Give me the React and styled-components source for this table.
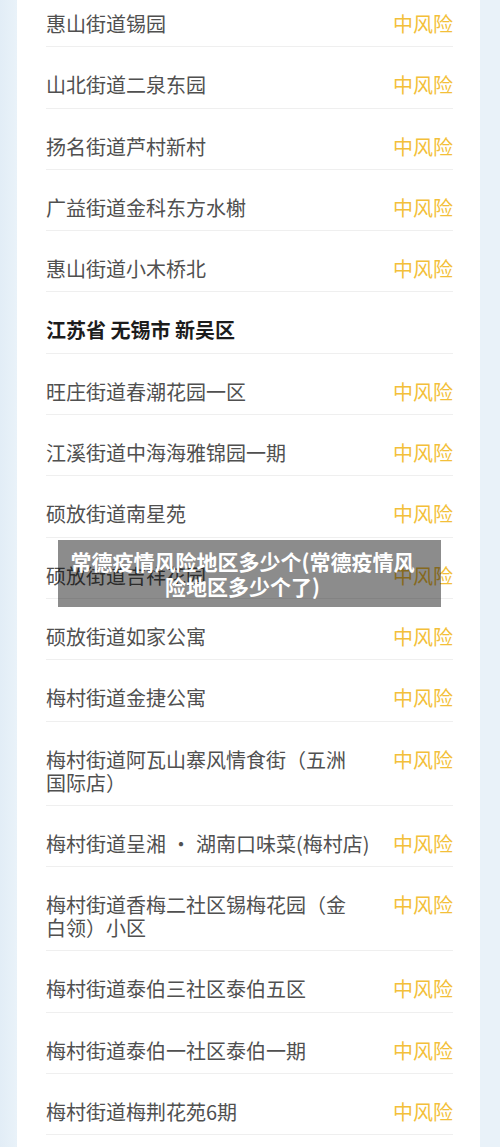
import React from 'react';
import styled, { createGlobalStyle } from 'styled-components';

const GlobalStyle = createGlobalStyle`
  html, body {
    margin: 0;
    padding: 0;
    height: 100%;
    overflow: hidden;
    background: #e6eff7;
  }
  #root {
    height: 100%;
  }
`;

// Page layout
const Page = styled.div`
  position: relative;
  height: 1147px;
  padding: 0 20px 0 17px;
  background: linear-gradient(to right, #e2edf6 0, #e9f2f9 17px, #e9f2f9 100%);
  font-family: 'Noto Sans CJK SC', 'Noto Sans', sans-serif;
  overflow: hidden;
`;

const Card = styled.div`
  display: flow-root;
  background: #fff;
  height: 100%;
  padding: 0 27px 0 29px;
`;

const List = styled.div`
  margin-top: -14px;
  display: flex;
  flex-direction: column;
`;

const Row = styled.div`
  display: flex;
  justify-content: space-between;
  align-items: flex-start;
  padding: 26px 0 11.3px;
  border-bottom: 1px solid #efefef;
  line-height: 23px;
  font-size: 20px;
`;

const Name = styled.div`
  max-width: ${(p) => (p.$nowrap ? 'none' : '318px')};
  color: ${(p) => (p.$header ? '#1c1c1c' : '#505050')};
  font-weight: ${(p) => (p.$header ? 700 : 400)};
  white-space: ${(p) => (p.$nowrap ? 'nowrap' : 'normal')};
`;

const Dot = styled.span`
  display: inline-block;
  margin: 0 5px;
`;

const Risk = styled.div`
  color: #f3bf3a;
  white-space: nowrap;
`;

// Caption overlay on top of the list
const Caption = styled.div`
  position: absolute;
  left: 58px;
  top: 540px;
  width: 383px;
  height: 67px;
  box-sizing: border-box;
  padding: 0 24px 0 10px;
  display: flex;
  align-items: center;
  justify-content: center;
  text-align: center;
  background: rgba(0, 0, 0, 0.45);
  color: #fff;
  font-size: 21px;
  font-weight: 700;
  line-height: 25px;
`;

const rows = [
  { name: '惠山街道锡园' },
  { name: '山北街道二泉东园' },
  { name: '扬名街道芦村新村' },
  { name: '广益街道金科东方水榭' },
  { name: '惠山街道小木桥北' },
  { name: '江苏省 无锡市 新吴区', header: true },
  { name: '旺庄街道春潮花园一区' },
  { name: '江溪街道中海海雅锦园一期' },
  { name: '硕放街道南星苑' },
  { name: '硕放街道吉祥花园' },
  { name: '硕放街道如家公寓' },
  { name: '梅村街道金捷公寓' },
  { name: '梅村街道阿瓦山寨风情食街（五洲国际店）' },
  {
    name: (
      <>
        梅村街道呈湘<Dot>·</Dot>湖南口味菜(梅村店)
      </>
    ),
    nowrap: true,
  },
  { name: '梅村街道香梅二社区锡梅花园（金白领）小区' },
  { name: '梅村街道泰伯三社区泰伯五区' },
  { name: '梅村街道泰伯一社区泰伯一期' },
  { name: '梅村街道梅荆花苑6期' },
];

export default function App() {
  return (
    <>
      <GlobalStyle />
      <Page>
        <Card>
          <List>
            {rows.map((r, i) => (
              <Row key={i}>
                <Name $header={r.header} $nowrap={r.nowrap}>
                  {r.name}
                </Name>
                {!r.header && <Risk>中风险</Risk>}
              </Row>
            ))}
          </List>
        </Card>
        <Caption>常德疫情风险地区多少个(常德疫情风险地区多少个了)</Caption>
      </Page>
    </>
  );
}
